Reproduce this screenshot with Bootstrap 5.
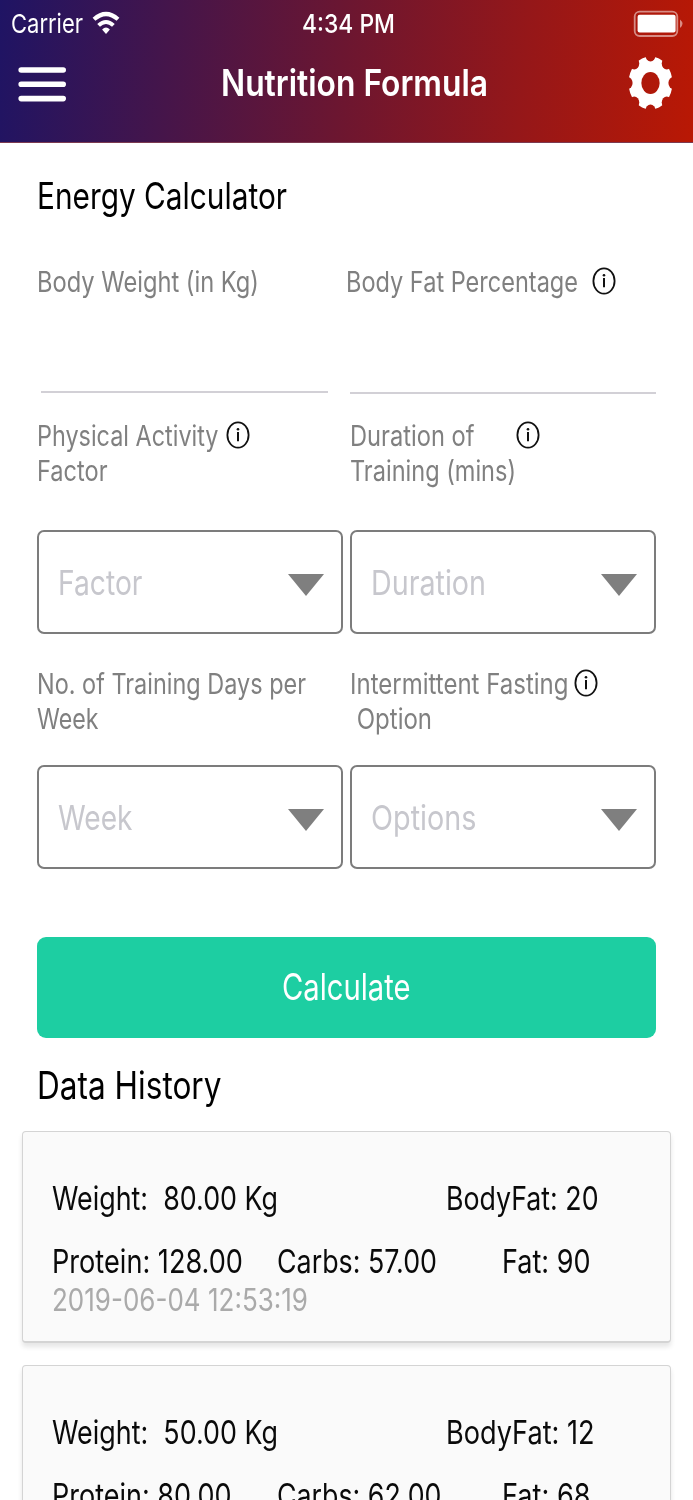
<!DOCTYPE html>
<html lang="en">
<head>
<meta charset="utf-8">
<meta name="viewport" content="width=device-width, initial-scale=1">
<title>Nutrition Formula</title>
<link href="https://cdn.jsdelivr.net/npm/bootstrap@5.3.0/dist/css/bootstrap.min.css" rel="stylesheet">
<style>
  html, body { height: 1500px; overflow: hidden; }
  body { font-family: Inter, "Liberation Sans", sans-serif; color: #0a0a0a; background: #fff; }
  main { height: 1357px; overflow: hidden; }
  svg { display: block; flex: none; }
  /* condensed text: the script narrows each run to data-w */
  .fit { display: inline-block; white-space: pre; transform-origin: 0 50%; flex: none; }
  .top-area { height: 143px; background: linear-gradient(96deg, #1f1464 0%, #6b1631 49%, #951719 75%, #b91804 100%); border-bottom: 1px solid #7c3a50; color: #fff; }
  .status-row { height: 48px; padding: 0 10px 0 11px; font-size: 26px; line-height: 48px; }
  .status-row > div, .title-row > div { flex: 1 1 0; }
  .clock { font-weight: 500; margin-left: 3px; }
  .title-row { height: 70px; padding: 0 20px 0 18px; font-size: 37px; font-weight: 600; line-height: 70px; }
  .title-text { position: relative; left: 8.5px; }
  .form-area { padding: 26px 37px 0; }
  .heading-text { font-size: 37px; line-height: 54px; height: 54px; color: #000; }
  .pair { display: grid; grid-template-columns: 305.5px 305.5px; column-gap: 7.5px; }
  .first-pair { margin-top: 41px; }
  .second-pair { margin-top: 24px; }
  .second-pair .picker { margin-top: 42px; }
  .third-pair { margin-top: 32px; }
  .third-pair .picker { margin-top: 29px; }
  .field-label { font-size: 28.5px; line-height: 35px; color: #808080; }
  .field-label > div { height: 35px; }
  .pair > div:last-child .field-label { margin-left: -.5px; }
  .line-input { height: 93px; padding: 0; background: transparent; border: 0; border-bottom: 2px solid #d2d0d6; border-radius: 0; }
  .weight-input { width: 287px; margin: 1px 0 0 3.5px; }
  .fat-input { margin-top: 2px; }
  .fat-label { margin-left: -3.5px; }
  .fat-icon { margin-left: 13.5px; }
  .act-icon { margin-left: 7px; }
  .dur-icon { margin-left: 41.5px; }
  .fast-icon { margin-left: 6px; }
  .info-icon { margin-top: -1px; }
  .picker { height: 104px; border: 2px solid #7c7c7c; border-radius: 7px; padding: 1px 17px 0 18.5px; font-size: 34.5px; line-height: 100px; color: #c7c7cd; background: #fff; }
  .btn-calc { height: 101px; margin-top: 67.5px; padding: 0; border: 0; border-radius: 9px; background: #1dcea2; color: #fff; font-size: 36.5px; line-height: 101px; }
  .history-title { font-size: 38px; line-height: 54px; height: 54px; margin: 20.5px 37px 18.5px; color: #000; }
  .record { height: 212px; margin: 0 22px 22px; padding: 43.5px 28px 0 28.5px; background: #fafafa; border: 1px solid #d4d4d4; border-bottom: 2px solid #d4d4d4; border-radius: 4px; box-shadow: 0 4px 5px rgba(0,0,0,.1); font-size: 33px; line-height: 46px; }
  .record .stats { display: grid; grid-template-columns: 394px 1fr; height: 46px; }
  .record .macro { display: grid; grid-template-columns: 225px 225px 1fr; height: 46px; margin-top: 17px; }
  .record .stamp { font-size: 30.5px; line-height: 31px; height: 31px; color: #aaa; }
</style>
</head>
<body>
<svg width="0" height="0" class="position-absolute">
  <symbol id="info" viewBox="0 0 24 28" preserveAspectRatio="none">
    <ellipse cx="12" cy="14" rx="10.6" ry="12.7" fill="none" stroke="#111" stroke-width="1.8"/>
    <circle cx="12" cy="8.2" r="1.3" fill="#111"/><path d="M12 11V20.2" stroke="#111" stroke-width="2"/>
  </symbol>
  <symbol id="caret" viewBox="0 0 36 22"><path d="M0 0H36L18 22Z" fill="#7f7f7f"/></symbol>
</svg>

<header class="top-area">
  <div class="status-row d-flex align-items-center">
    <div class="d-flex align-items-center">
      <span class="fit" data-w="72">Carrier</span>
      <svg class="ms-2" width="30" height="26" viewBox="0 0 30 26" fill="none" stroke="#fff">
        <path d="M3 8.3Q15-2.3 27 8.3" stroke-width="4.2"/>
        <path d="M7.6 14.4Q15 7.6 22.4 14.4" stroke-width="4"/>
        <path d="M11.1 18.6Q15 14.6 18.9 18.6L15 23Z" fill="#fff" stroke="none"/>
      </svg>
    </div>
    <span class="fit clock" data-w="93">4:34 PM</span>
    <div class="d-flex justify-content-end">
      <svg width="50" height="28" viewBox="0 0 50 28">
        <rect x="1.7" y="1.6" width="42.6" height="24.4" rx="5" fill="none" stroke="#fff" stroke-opacity=".5" stroke-width="1.8"/>
        <rect x="4.6" y="4.8" width="38" height="17.8" rx="2" fill="#fff"/>
        <path d="M47 9.5Q52 13.8 47 18.1Z" fill="#fff" fill-opacity=".5"/>
      </svg>
    </div>
  </div>
  <div class="title-row d-flex align-items-center">
    <div>
      <svg width="50" height="37" viewBox="0 0 50 37" stroke="#fff" stroke-width="5.6" stroke-linecap="round"><path d="M3.2 5H45.2M3.2 19.3H45.2M3.2 33.6H45.2"/></svg>
    </div>
    <span class="title-text"><span class="fit" data-w="267">Nutrition Formula</span></span>
    <div class="d-flex justify-content-end">
      <svg width="45" height="54" viewBox="-27 -27 54 54" preserveAspectRatio="none">
        <mask id="gear"><circle r="26.4" fill="#fff"/><circle r="11" fill="#000"/>
          <g fill="#000"><circle cy="-27.5" r="6"/><circle cy="27.5" r="6"/><circle cx="-27.5" r="6"/><circle cx="27.5" r="6"/>
          <circle cx="19.5" cy="19.5" r="6"/><circle cx="-19.5" cy="19.5" r="6"/><circle cx="19.5" cy="-19.5" r="6"/><circle cx="-19.5" cy="-19.5" r="6"/></g>
        </mask>
        <rect x="-27" y="-27" width="54" height="54" fill="#fff" mask="url(#gear)"/>
      </svg>
    </div>
  </div>
</header>

<main>
  <form class="form-area">
    <div class="heading-text"><span class="fit" data-w="250">Energy Calculator</span></div>

    <div class="pair first-pair">
      <div>
        <div class="field-label"><div><span class="fit" data-w="222">Body Weight (in Kg)</span></div></div>
        <input class="form-control line-input weight-input" aria-label="Body Weight">
      </div>
      <div>
        <div class="field-label"><div class="d-flex align-items-center fat-label"><span class="fit" data-w="232">Body Fat Percentage</span><svg class="info-icon fat-icon" width="24" height="28"><use href="#info"/></svg></div></div>
        <input class="form-control line-input fat-input" aria-label="Body Fat">
      </div>
    </div>

    <div class="pair second-pair">
      <div>
        <div class="field-label"><div class="d-flex align-items-center"><span class="fit" data-w="181.5">Physical Activity</span><svg class="info-icon act-icon" width="24" height="28"><use href="#info"/></svg></div>
        <div><span class="fit" data-w="70.5">Factor</span></div></div>
        <div class="picker d-flex align-items-center justify-content-between"><span class="fit" data-w="84.5">Factor</span><svg class="mt-1" width="36" height="22"><use href="#caret"/></svg></div>
      </div>
      <div>
        <div class="field-label"><div class="d-flex align-items-center"><span class="fit" data-w="124.5">Duration of</span><svg class="info-icon dur-icon" width="24" height="28"><use href="#info"/></svg></div>
        <div><span class="fit" data-w="166">Training (mins)</span></div></div>
        <div class="picker d-flex align-items-center justify-content-between"><span class="fit" data-w="115">Duration</span><svg class="mt-1" width="36" height="22"><use href="#caret"/></svg></div>
      </div>
    </div>

    <div class="pair third-pair">
      <div>
        <div class="field-label"><div><span class="fit" data-w="269">No. of Training Days per</span></div>
        <div><span class="fit" data-w="61.5">Week</span></div></div>
        <div class="picker d-flex align-items-center justify-content-between"><span class="fit" data-w="74.5">Week</span><svg class="mt-1" width="36" height="22"><use href="#caret"/></svg></div>
      </div>
      <div>
        <div class="field-label"><div class="d-flex align-items-center"><span class="fit" data-w="218.5">Intermittent Fasting</span><svg class="info-icon fast-icon" width="24" height="28"><use href="#info"/></svg></div>
        <div><span class="fit" data-w="82"> Option</span></div></div>
        <div class="picker d-flex align-items-center justify-content-between"><span class="fit" data-w="105.5">Options</span><svg class="mt-1" width="36" height="22"><use href="#caret"/></svg></div>
      </div>
    </div>

    <button type="button" class="btn btn-calc w-100 d-flex justify-content-center"><span class="fit" data-w="128.5">Calculate</span></button>
  </form>

  <div class="history-title"><span class="fit" data-w="184.5">Data History</span></div>

  <section class="record">
    <div class="stats"><div><span class="fit" data-w="226">Weight:  80.00 Kg</span></div><div><span class="fit" data-w="152.5">BodyFat: 20</span></div></div>
    <div class="macro"><div><span class="fit" data-w="191">Protein: 128.00</span></div><div><span class="fit" data-w="160">Carbs: 57.00</span></div><div><span class="fit" data-w="88.5">Fat: 90</span></div></div>
    <div class="stamp"><span class="fit" data-w="256">2019-06-04 12:53:19</span></div>
  </section>

  <section class="record">
    <div class="stats"><div><span class="fit" data-w="226">Weight:  50.00 Kg</span></div><div><span class="fit" data-w="148.5">BodyFat: 12</span></div></div>
    <div class="macro"><div><span class="fit" data-w="179.5">Protein: 80.00</span></div><div><span class="fit" data-w="164.5">Carbs: 62.00</span></div><div><span class="fit" data-w="88.5">Fat: 68</span></div></div>
  </section>
</main>

<script src="https://cdn.jsdelivr.net/npm/bootstrap@5.3.0/dist/js/bootstrap.bundle.min.js"></script>
<script>
  document.querySelectorAll('.fit').forEach(function (el) {
    var natural = el.getBoundingClientRect().width, w = parseFloat(el.dataset.w);
    el.style.transform = 'scaleX(' + w / natural + ')';
    el.style.marginRight = (w - natural) + 'px';
  });
</script>
</body>
</html>
